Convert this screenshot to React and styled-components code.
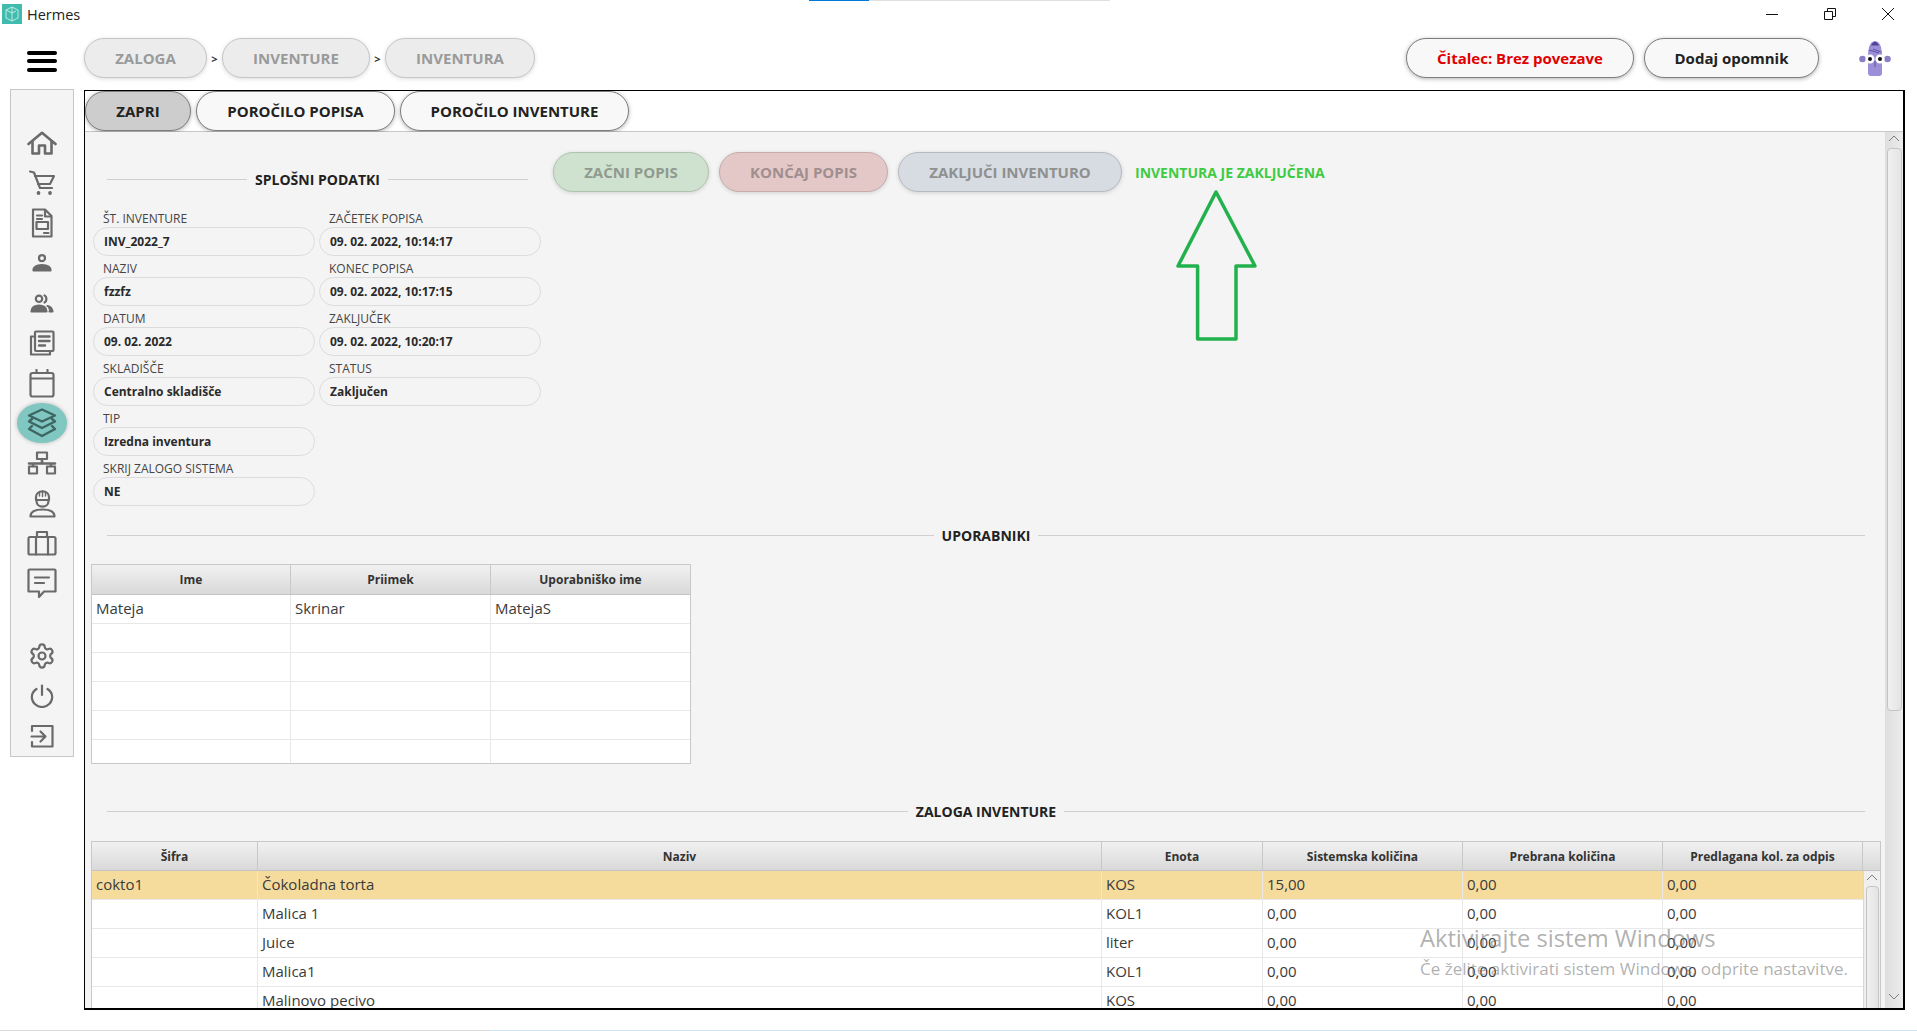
import React from "react";
import styled, { createGlobalStyle } from "styled-components";
import { Settings } from "lucide-react";

const GlobalStyle = createGlobalStyle`
  * { box-sizing: border-box; }
  html, body { margin: 0; padding: 0; background: #ffffff; }
  body { font-family: "Open Sans", "Liberation Sans", sans-serif; color: #333333; }
`;

const Page = styled.div`
  width: 1917px;
  height: 1031px;
  position: relative;
  display: flex;
  flex-direction: column;
  overflow: hidden;
  background: #ffffff;
`;
const LoadBar = styled.div`
  position: absolute;
  top: 0;
  left: 809px;
  width: 301px;
  height: 1px;
  background: linear-gradient(to right, #0078d7 60px, #e0e0e0 60px);
`;
const TitleBar = styled.div`
  height: 30px;
  display: flex;
  align-items: center;
  padding: 0 23px 2px 2px;
  flex-shrink: 0;
`;
const AppName = styled.span`
  margin-left: 5px;
  font-size: 14.5px;
  color: #222222;
  flex: 1;
`;
const WindowButton = styled.button`
  width: 12px;
  height: 12px;
  margin-left: 46px;
  padding: 0;
  border: 0;
  background: none;
  display: flex;
  svg { display: block; }
`;
const Header = styled.div`
  height: 40px;
  margin-top: 8px;
  display: flex;
  align-items: center;
  flex-shrink: 0;
  padding-left: 27px;
`;
const Burger = styled.div`
  width: 30px;
  height: 21px;
  margin: 6px 27px 0 0;
  display: flex;
  flex-direction: column;
  justify-content: space-between;
  span {
    display: block;
    height: 4px;
    border-radius: 2px;
    background: #000000;
  }
`;
const Pill = styled.button`
  height: ${(p) => p.$h || 40}px;
  width: ${(p) => p.$w}px;
  padding: 0;
  border-radius: 20px;
  flex-shrink: 0;
  font-family: "Open Sans", sans-serif;
  font-weight: 700;
  font-size: 15px;
  white-space: nowrap;
  border: 1px solid ${(p) => p.$line};
  background: ${(p) => p.$bg};
  color: ${(p) => p.$ink};
  box-shadow: 0 1px 4px rgba(0, 0, 0, ${(p) => p.$shadow || 0.14});
`;
const Sep = styled.span`
  width: 15px;
  text-align: center;
  font-size: 11px;
  font-weight: 700;
  color: #333333;
`;
const HeaderRight = styled.div`
  margin-left: auto;
  display: flex;
  align-items: center;
  gap: 10px;
  padding-right: 26px;
  svg { margin-left: 30px; display: block; }
`;
const Body = styled.div`
  margin-top: 11px;
  padding-left: 10px;
  display: flex;
  gap: 10px;
  align-items: flex-start;
  flex-shrink: 0;
`;
const Sidebar = styled.nav`
  width: 64px;
  height: 668px;
  padding-top: 33px;
  background: #f4f4f4;
  border: 1px solid #c6c6c6;
  display: flex;
  flex-direction: column;
  align-items: center;
`;
const SideItem = styled.div`
  width: 50px;
  height: 40px;
  flex-shrink: 0;
  display: flex;
  align-items: center;
  justify-content: center;
  border-radius: 25px / 20px;
  color: ${(p) => (p.$active ? "#3d6663" : "#6a6a6a")};
  background: ${(p) => (p.$active ? "#80c6c1" : "transparent")};
  box-shadow: ${(p) => (p.$active ? "0 0 4px rgba(0,0,0,.25)" : "none")};
  svg { display: block; }
`;
const SideGap = styled.div`
  height: 33px;
  flex-shrink: 0;
`;
const Main = styled.main`
  width: 1821px;
  height: 920px;
  margin-top: 1px;
  border: 1px solid #000000;
  border-width: 1px 2px 2px 1px;
  display: flex;
  flex-direction: column;
  overflow: hidden;
  background: #ffffff;
`;
const Tabs = styled.div`
  height: 41px;
  flex-shrink: 0;
  display: flex;
  gap: 5px;
  border-bottom: 1px solid #c8c8c8;
`;
const ContentWrap = styled.div`
  flex: 1;
  min-height: 0;
  display: flex;
`;
const Content = styled.div`
  flex: 1;
  min-width: 0;
  padding: 37px 0 0 6px;
  background: #f4f4f4;
  overflow: hidden;
`;
const TopRow = styled.div`
  display: flex;
  align-items: flex-start;
  gap: 12px;
  padding-left: 2px;
`;
const General = styled.section`
  width: 448px;
  flex-shrink: 0;
`;
const Divider = styled.div`
  height: 20px;
  display: flex;
  align-items: center;
  gap: 8px;
  margin: ${(p) => p.$m || "0"};
  font-size: 14px;
  font-weight: 700;
  color: #222222;
  white-space: nowrap;
  &::before, &::after {
    content: "";
    flex: 1;
    height: 1px;
    background: #cfcfcf;
  }
`;
const Fields = styled.div`
  margin-top: 18px;
  display: grid;
  grid-auto-flow: column;
  grid-template-rows: repeat(6, 49px);
  grid-template-columns: 222px 222px;
  gap: 1px 4px;
`;
const Field = styled.div`
  display: flex;
  flex-direction: column;
`;
const Label = styled.label`
  height: 20px;
  line-height: 23px;
  padding-left: 10px;
  font-size: 12px;
  color: #444444;
`;
const Value = styled.div`
  height: 29px;
  line-height: 27px;
  padding-left: 10px;
  border: 1px solid #dcdcdc;
  border-radius: 15px;
  font-size: 12px;
  font-weight: 700;
  color: #2a2a2a;
`;
const Actions = styled.div`
  position: relative;
  margin-top: -17px;
  display: flex;
  align-items: center;
  gap: 10px;
  svg { position: absolute; left: 623px; top: 38px; }
`;
const DoneText = styled.span`
  margin-left: 3px;
  font-size: 14px;
  font-weight: 700;
  color: #3ecb43;
  white-space: nowrap;
`;
const Table = styled.div`
  width: ${(p) => p.$w}px;
  height: ${(p) => p.$h}px;
  margin-top: ${(p) => p.$mt}px;
  border: 1px solid #c8c8c8;
  background: #ffffff;
  overflow: hidden;
`;
const HeadRow = styled.div`
  height: ${(p) => p.$h}px;
  display: grid;
  grid-template-columns: ${(p) => p.$cols};
  border-bottom: 1px solid #c4c4c4;
`;
const HeadCell = styled.div`
  display: flex;
  align-items: center;
  justify-content: center;
  font-size: 12px;
  font-weight: 700;
  color: #333333;
  background: linear-gradient(#f1f1f1, #d9d9d9);
  border-right: 1px solid #c8c8c8;
  &:last-child { border-right: 0; }
`;
const StockBody = styled.div`
  display: flex;
`;
const Rows = styled.div`
  flex: 1;
  min-width: 0;
`;
const Row = styled.div`
  height: 29px;
  display: grid;
  grid-template-columns: ${(p) => p.$cols};
  border-bottom: 1px solid #e8e8e8;
  background: ${(p) => (p.$selected ? "#f6dc9c" : "#ffffff")};
`;
const Cell = styled.div`
  padding-left: 4px;
  line-height: 27px;
  font-size: 15px;
  color: #3a3a3a;
  white-space: nowrap;
  overflow: hidden;
  border-right: 1px solid #e8e8e8;
  &:last-child { border-right: 0; }
`;
const InnerBar = styled.div`
  width: 17px;
  flex-shrink: 0;
  padding: 3px 2px 0;
  background: #efefef;
  border-left: 1px solid #d8d8d8;
  display: flex;
  flex-direction: column;
  align-items: center;
  gap: 5px;
`;
const Thumb = styled.div`
  width: ${(p) => p.$w}px;
  height: ${(p) => p.$h}px;
  flex-shrink: 0;
  border: 1px solid #c4c4c4;
  border-radius: 4px;
  background: linear-gradient(to right, #f0f0f0, #e4e4e4);
`;
const OuterBar = styled.div`
  width: 18px;
  flex-shrink: 0;
  padding: 3px 1px;
  background: linear-gradient(to right, #dedede, #ececec);
  display: flex;
  flex-direction: column;
  align-items: center;
  gap: 6px;
`;
const BarEnd = styled.div`
  margin-top: auto;
`;
const Watermark = styled.div`
  position: absolute;
  left: 1420px;
  top: 922px;
  color: rgba(110, 110, 110, 0.55);
  pointer-events: none;
  white-space: nowrap;
`;
const WmTitle = styled.div`
  font-size: 23.7px;
  line-height: 32px;
`;
const WmText = styled.div`
  margin-top: 4px;
  font-size: 17px;
  line-height: 22px;
`;
const BottomLine = styled.div`
  position: absolute;
  left: 0;
  right: 0;
  bottom: 0;
  height: 1px;
  background: linear-gradient(to right, #d8d8d8 490px, #cde6f1 490px);
`;

const Icon = ({ w = 32, h = 32, sw = 2.2, children }) => (
  <svg width={w} height={h} viewBox={`0 0 ${w} ${h}`} fill="none" stroke="currentColor" strokeWidth={sw} strokeLinejoin="round" strokeLinecap="round">
    {children}
  </svg>
);

const icons = [
  <Icon w={30} h={24} sw={2.6}>
    <path d="M1.5 13 15 1.8 28.5 13" />
    <path d="M5.5 10.5V22.5H12V14.5H18V22.5H24.5V10.5" />
  </Icon>,
  <Icon w={26} h={26}>
    <path d="M1 1.5 5 2.5 11 18H23" />
    <path d="M6 6H25L21 14H9" />
    <circle cx="9.5" cy="23" r="1.9" fill="currentColor" stroke="none" />
    <circle cx="21" cy="23" r="1.9" fill="currentColor" stroke="none" />
  </Icon>,
  <Icon w={22} h={30}>
    <path d="M2 1.5H14L20.5 8V28.5H2Z" />
    <path d="M14 2V8.5H20" />
    <path d="M6 7.5H11M6 11H11" />
    <rect x="5.5" y="14" width="11.5" height="7" />
    <path d="M13 25H17.5" />
  </Icon>,
  <Icon w={20} h={18}>
    <circle cx="10" cy="4.2" r="3" />
    <path d="M1.5 16.5C1.5 13 5 11 10 11S18.5 13 18.5 16.5Z" fill="currentColor" />
  </Icon>,
  <Icon w={24} h={19}>
    <circle cx="9" cy="4.8" r="3.2" />
    <path d="M14.5 1.5C17 2.5 17 7.5 14.5 8.5" />
    <path d="M1.5 17.5C1.5 13.5 5 11.5 9 11.5S16.5 13.5 16.5 17.5Z" fill="currentColor" />
    <path d="M17.5 12C20 12.5 22 14.5 22.5 17.5H19.5" fill="currentColor" />
  </Icon>,
  <Icon w={26} h={26}>
    <path d="M5 6.5H2V24.5H21V21.5" />
    <rect x="6" y="1.5" width="18.5" height="19.5" rx="1" />
    <path d="M10 6.5H20.5M10 11H20.5M10 15.5H16" strokeWidth="2.4" />
  </Icon>,
  <Icon w={26} h={29}>
    <rect x="1.5" y="4" width="23" height="23.5" rx="2" />
    <path d="M2 9.5H24M7.5 1V4M18.5 1V4" />
  </Icon>,
  <Icon w={30} h={30} sw={2.4}>
    <path d="M15 1.5 28 7.5 15 13.5 2 7.5Z" />
    <path d="M5 11 2 13.5 15 20 28 13.5 25 11" />
    <path d="M5 18 2 21 15 28 28 21 25 18" />
  </Icon>,
  <Icon w={30} h={24}>
    <rect x="10" y="1.5" width="10" height="6.5" />
    <path d="M15 8V12M2 12.5H28M6 12.5V15M24 12.5V15" strokeWidth="2.6" />
    <rect x="2" y="15.5" width="8" height="7" />
    <rect x="20" y="15.5" width="8" height="7" />
  </Icon>,
  <Icon w={27} h={29}>
    <path d="M7 11V8C7 0.5 20 0.5 20 8V11Z" />
    <path d="M13.5 2V7.5M10.5 3V7M16.5 3V7" strokeWidth="1.4" />
    <path d="M7.5 12C7.5 19.5 19.5 19.5 19.5 12" />
    <path d="M1.5 27.5C1.5 22.5 7 20.5 13.5 20.5S25.5 22.5 25.5 27.5Z" />
  </Icon>,
  <Icon w={30} h={26}>
    <rect x="1.5" y="7" width="27" height="17.5" rx="1.5" />
    <path d="M10 7V2H20V7M9 7V24.5M21 7V24.5" />
  </Icon>,
  <Icon w={30} h={31}>
    <path d="M2.5 1.5H27.5A1 1 0 0 1 28.5 2.5V23.5H17L12 29V23.5H1.5V2.5A1 1 0 0 1 2.5 1.5Z" />
    <path d="M8 9.5H22M8 15H17" />
  </Icon>,
];

const bottomIcons = [
  <Settings size={28} strokeWidth={1.9} />,
  <Icon w={24} h={24}>
    <path d="M12 1.5V11" />
    <path d="M6.5 5C3.5 7 1.8 10 1.8 13A10.2 10 0 0 0 22.2 13C22.2 10 20.5 7 17.5 5" />
  </Icon>,
  <Icon w={24} h={24}>
    <path d="M2 7V2H22.5V22.5H2V18" />
    <path d="M1.5 12.5H15M10.5 7.5 15.5 12.5 10.5 17.5" />
  </Icon>,
];

const crumbProps = { $line: "#c6c6c6", $bg: "#ececec", $ink: "#9a9a9a" };
const tabProps = { $line: "#7d7d7d", $bg: "#f8f8f8", $ink: "#222222", $shadow: 0.3 };

const generalFields = [
  ["ŠT. INVENTURE", "INV_2022_7"],
  ["NAZIV", "fzzfz"],
  ["DATUM", "09. 02. 2022"],
  ["SKLADIŠČE", "Centralno skladišče"],
  ["TIP", "Izredna inventura"],
  ["SKRIJ ZALOGO SISTEMA", "NE"],
  ["ZAČETEK POPISA", "09. 02. 2022, 10:14:17"],
  ["KONEC POPISA", "09. 02. 2022, 10:17:15"],
  ["ZAKLJUČEK", "09. 02. 2022, 10:20:17"],
  ["STATUS", "Zaključen"],
];

const userCols = "199px 200px 199px";
const users = [
  ["Mateja", "Skrinar", "MatejaS"],
  ["", "", ""],
  ["", "", ""],
  ["", "", ""],
  ["", "", ""],
  ["", "", ""],
];

const stockCols = "166px 844px 161px 200px 200px 200px";
const stockHeadCols = stockCols + " 17px";
const stock = [
  ["cokto1", "Čokoladna torta", "KOS", "15,00", "0,00", "0,00"],
  ["", "Malica 1", "KOL1", "0,00", "0,00", "0,00"],
  ["", "Juice", "liter", "0,00", "0,00", "0,00"],
  ["", "Malica1", "KOL1", "0,00", "0,00", "0,00"],
  ["", "Malinovo pecivo", "KOS", "0,00", "0,00", "0,00"],
];

const Chevron = ({ down }) => (
  <svg width="12" height="7" viewBox="0 0 12 7" fill="none" stroke="#7c7c7c" strokeWidth="1">
    <path d={down ? "M1 1 6 6 11 1" : "M1 6 6 1 11 6"} />
  </svg>
);

const Avatar = () => (
  <svg width="32" height="38" viewBox="0 0 32 38">
    <path d="M16 2Q12 2 10 8L9 14V34Q9 37 12 37H20Q23 37 23 34V14L22 8Q20 2 16 2Z" fill="#9c8fd8" />
    <path d="M12 6.5Q16 -1 20 6.5Z" fill="#4f4396" />
    <circle cx="3.5" cy="20" r="3.3" fill="#8a80c6" />
    <circle cx="28.5" cy="20" r="3.3" fill="#8a80c6" />
    <circle cx="11" cy="20" r="4.5" fill="#ffffff" />
    <circle cx="21" cy="20" r="4.5" fill="#ffffff" />
    <circle cx="11" cy="20" r="2" fill="#111111" />
    <circle cx="21" cy="20" r="2" fill="#111111" />
    <path d="M16 22V28M10 11 20 14M14 10 22 13" stroke="#4f4396" strokeWidth="0.8" fill="none" />
  </svg>
);

const Logo = () => (
  <svg width="20" height="20" viewBox="0 0 20 20" fill="none" stroke="#cdeee9" strokeWidth="0.9">
    <rect width="20" height="20" fill="#40bcae" stroke="none" />
    <path d="M10 3 16 6V14L10 17 4 14V6ZM10 3V17M4 6 10 9 14 7" />
  </svg>
);

export default function App() {
  return (
    <Page>
      <GlobalStyle />
      <LoadBar />
      <TitleBar>
        <Logo />
        <AppName>Hermes</AppName>
        <WindowButton>
          <svg width="12" height="12" stroke="#111"><path d="M0 6.5H12" /></svg>
        </WindowButton>
        <WindowButton>
          <svg width="12" height="12" fill="none" stroke="#111"><path d="M.5 3.5H8.5V11.5H.5ZM3.5 3.5V.5H11.5V8.5H8.5" /></svg>
        </WindowButton>
        <WindowButton>
          <svg width="12" height="12" stroke="#111"><path d="M0 0 12 12M12 0 0 12" /></svg>
        </WindowButton>
      </TitleBar>

      <Header>
        <Burger><span /><span /><span /></Burger>
        <Pill $w={123} {...crumbProps}>ZALOGA</Pill>
        <Sep>&gt;</Sep>
        <Pill $w={148} {...crumbProps}>INVENTURE</Pill>
        <Sep>&gt;</Sep>
        <Pill $w={150} {...crumbProps}>INVENTURA</Pill>
        <HeaderRight>
          <Pill $w={228} {...tabProps} $ink="#e00000">Čitalec: Brez povezave</Pill>
          <Pill $w={175} {...tabProps}>Dodaj opomnik</Pill>
          <Avatar />
        </HeaderRight>
      </Header>

      <Body>
        <Sidebar>
          {icons.map((icon, i) => (
            <SideItem key={i} $active={i === 7}>{icon}</SideItem>
          ))}
          <SideGap />
          {bottomIcons.map((icon, i) => (
            <SideItem key={i}>{icon}</SideItem>
          ))}
        </Sidebar>

        <Main>
          <Tabs>
            <Pill $w={106} {...tabProps} $bg="#cdcdcd">ZAPRI</Pill>
            <Pill $w={199} {...tabProps}>POROČILO POPISA</Pill>
            <Pill $w={229} {...tabProps}>POROČILO INVENTURE</Pill>
          </Tabs>
          <ContentWrap>
            <Content>
              <TopRow>
                <General>
                  <Divider $m="0 13px 0 14px">SPLOŠNI PODATKI</Divider>
                  <Fields>
                    {generalFields.map(([label, value]) => (
                      <Field key={label}>
                        <Label>{label}</Label>
                        <Value>{value}</Value>
                      </Field>
                    ))}
                  </Fields>
                </General>
                <Actions>
                  <Pill $w={156} $line="#aec4ae" $bg="#cfe2cf" $ink="#8f9a8f">ZAČNI POPIS</Pill>
                  <Pill $w={169} $line="#c6acac" $bg="#e4c8c8" $ink="#a08e8e">KONČAJ POPIS</Pill>
                  <Pill $w={224} $line="#b6babf" $bg="#d6dce2" $ink="#8f9090">ZAKLJUČI INVENTURO</Pill>
                  <DoneText>INVENTURA JE ZAKLJUČENA</DoneText>
                  <svg width="82" height="152" viewBox="0 0 82 152" fill="none" stroke="#22b14c" strokeWidth="3.5" strokeLinejoin="round">
                    <path d="M40 2 2 76H21.6V149H60V76H79Z" />
                  </svg>
                </Actions>
              </TopRow>

              <Divider $m="19px 20px 0 16px">UPORABNIKI</Divider>
              <Table $w={600} $h={200} $mt={19}>
                <HeadRow $h={30} $cols={userCols}>
                  <HeadCell>Ime</HeadCell>
                  <HeadCell>Priimek</HeadCell>
                  <HeadCell>Uporabniško ime</HeadCell>
                </HeadRow>
                {users.map((row, i) => (
                  <Row key={i} $cols={userCols}>
                    {row.map((c, j) => <Cell key={j}>{c}</Cell>)}
                  </Row>
                ))}
              </Table>

              <Divider $m="37px 20px 0 16px">ZALOGA INVENTURE</Divider>
              <Table $w={1790} $h={200} $mt={20}>
                <HeadRow $h={29} $cols={stockHeadCols}>
                  <HeadCell>Šifra</HeadCell>
                  <HeadCell>Naziv</HeadCell>
                  <HeadCell>Enota</HeadCell>
                  <HeadCell>Sistemska količina</HeadCell>
                  <HeadCell>Prebrana količina</HeadCell>
                  <HeadCell>Predlagana kol. za odpis</HeadCell>
                  <HeadCell />
                </HeadRow>
                <StockBody>
                  <Rows>
                    {stock.map((row, i) => (
                      <Row key={i} $cols={stockCols} $selected={i === 0}>
                        {row.map((c, j) => <Cell key={j}>{c}</Cell>)}
                      </Row>
                    ))}
                  </Rows>
                  <InnerBar>
                    <Chevron />
                    <Thumb $w={13} $h={140} />
                  </InnerBar>
                </StockBody>
              </Table>
            </Content>
            <OuterBar>
              <Chevron />
              <Thumb $w={15} $h={563} />
              <BarEnd><Chevron down /></BarEnd>
            </OuterBar>
          </ContentWrap>
        </Main>
      </Body>

      <Watermark>
        <WmTitle>Aktivirajte sistem Windows</WmTitle>
        <WmText>Če želite aktivirati sistem Windows, odprite nastavitve.</WmText>
      </Watermark>
      <BottomLine />
    </Page>
  );
}
